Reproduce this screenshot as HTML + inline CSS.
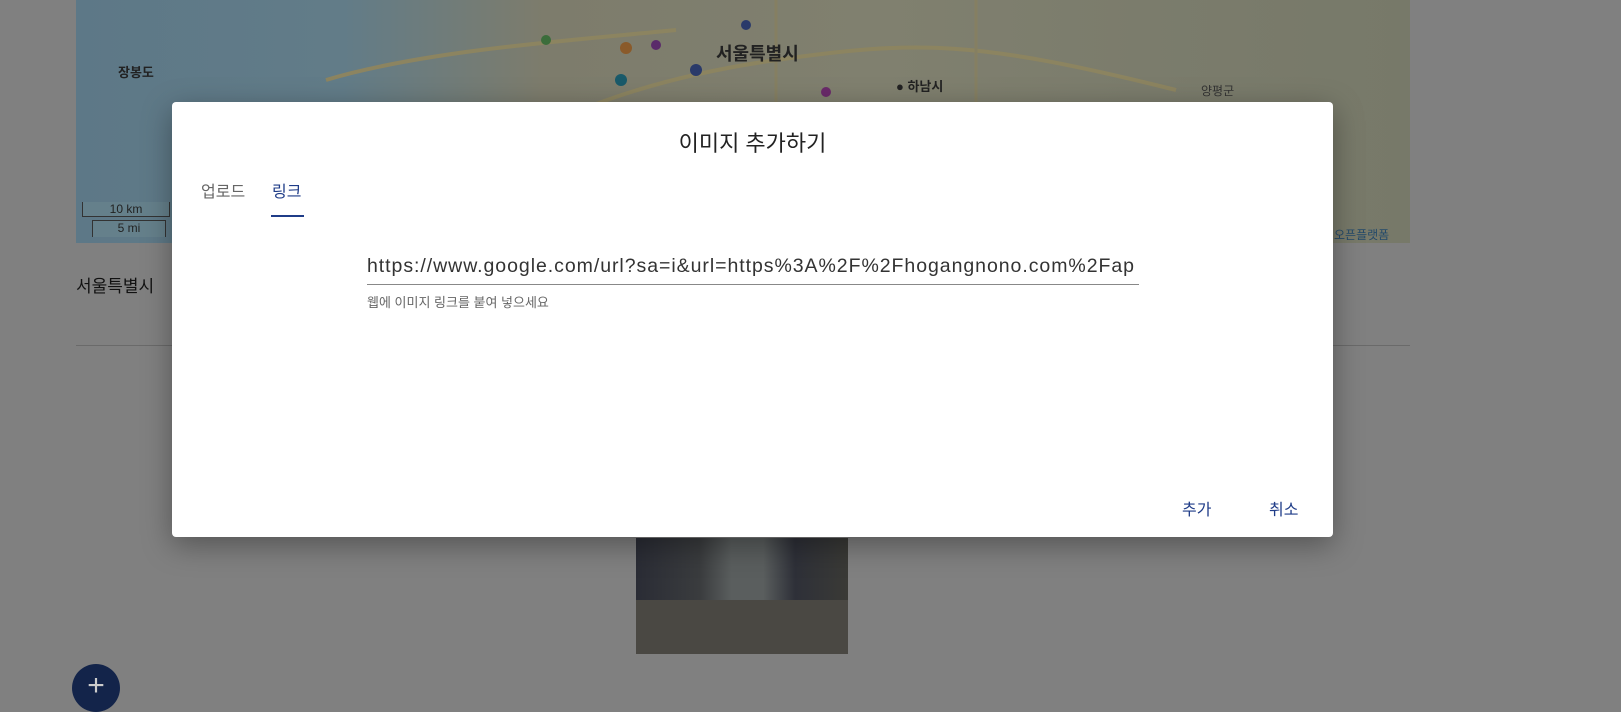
<!DOCTYPE html>
<html><head><meta charset="utf-8"><style>
body{margin:0;width:1621px;height:712px;overflow:hidden;background:#808080;font-family:"Liberation Sans","Noto Sans CJK KR",sans-serif;position:relative}
.map{position:absolute;left:76px;top:0;width:1334px;height:243px;background:linear-gradient(90deg,#5d7887 0%,#627c88 20%,#7d7c6c 35%,#80806f 60%,#7b7c6c 80%,#777969 100%)}
.abs{position:absolute}
.dlg{position:absolute;left:172px;top:102px;width:1161px;height:435px;background:#fff;border-radius:4px;box-shadow:0 8px 30px rgba(0,0,0,.35)}
</style></head><body>
<div class="map">
<svg width="1334" height="243" style="position:absolute;left:0;top:0">
<path d="M380 180 C460 120 560 80 700 60 S900 40 1100 90" stroke="#8c8460" stroke-width="4" fill="none"/>
<path d="M250 80 C350 50 500 40 600 30" stroke="#8c8460" stroke-width="4" fill="none"/>
<path d="M700 0 V243 M900 0 V243" stroke="#857f62" stroke-width="3" fill="none"/>
<g>
<circle cx="470" cy="40" r="5" fill="#3b6d3b"/><circle cx="550" cy="48" r="6" fill="#8a5a2a"/><circle cx="620" cy="70" r="6" fill="#2a3a6a"/><circle cx="670" cy="25" r="5" fill="#2a3a6a"/><circle cx="750" cy="92" r="5" fill="#6a2a6a"/><circle cx="580" cy="45" r="5" fill="#5a2a6a"/><circle cx="545" cy="80" r="6" fill="#1a5a6a"/>
</g>
</svg>
<div class="abs" style="left:42px;top:62px;font-size:13px;color:#222;font-weight:bold">장봉도</div>
<div class="abs" style="left:640px;top:40px;font-size:18px;color:#222;font-weight:bold">서울특별시</div>
<div class="abs" style="left:820px;top:76px;font-size:13px;color:#222;font-weight:bold">● 하남시</div>
<div class="abs" style="left:1125px;top:82px;font-size:12px;color:#333">양평군</div>
<div class="abs" style="left:6px;top:202px;width:86px;height:14px;border:1px solid #333;border-top:none;font-size:12px;color:#222;text-align:center;background:#65808b">10 km</div>
<div class="abs" style="left:16px;top:220px;width:72px;height:16px;border:1px solid #333;border-bottom:none;font-size:12px;color:#222;text-align:center;background:#65808b">5 mi</div>
<div class="abs" style="left:1258px;top:226px;font-size:12px;color:#244a6a">오픈플랫폼</div>
</div>
<div class="abs" style="left:76px;top:272px;font-size:17px;color:#111">서울특별시</div>
<div class="abs" style="left:76px;top:345px;width:1334px;height:1px;background:#6a6a6a"></div>
<div class="abs" style="left:636px;top:538px;width:212px;height:116px;background:linear-gradient(90deg,#2a2c35 0%,#3a3c3e 30%,#5a5e5e 45%,#5a5e5e 60%,#2e3038 75%,#3a3a36 100%)"></div>
<div class="abs" style="left:636px;top:600px;width:212px;height:54px;background:#4a4843"></div>
<div class="abs" style="left:72px;top:664px;width:48px;height:48px;border-radius:50%;background:#13244a;color:#ccc;font-size:30px;text-align:center;line-height:44px">+</div>
<div class="dlg">
<div class="abs" style="left:0;width:1161px;top:24px;text-align:center;font-size:22px;color:#222">이미지 추가하기</div>
<div class="abs" style="left:29px;top:76px;font-size:16px;color:#666">업로드</div>
<div class="abs" style="left:100px;top:76px;font-size:16px;color:#1f3c88">링크</div>
<div class="abs" style="left:99px;top:113px;width:33px;height:2px;background:#1f3c88"></div>
<div class="abs" style="left:195px;top:153px;font-size:19.5px;color:#333;letter-spacing:0.95px;white-space:nowrap">https://www.google.com/url?sa=i&amp;url=https%3A%2F%2Fhogangnono.com%2Fap</div>
<div class="abs" style="left:195px;top:182px;width:772px;height:1px;background:#888"></div>
<div class="abs" style="left:195px;top:190px;font-size:13px;color:#666">웹에 이미지 링크를 붙여 넣으세요</div>
<div class="abs" style="left:1010px;top:394px;font-size:16px;color:#1f3c88">추가</div>
<div class="abs" style="left:1097px;top:394px;font-size:16px;color:#1f3c88">취소</div>
</div>
</body></html>
